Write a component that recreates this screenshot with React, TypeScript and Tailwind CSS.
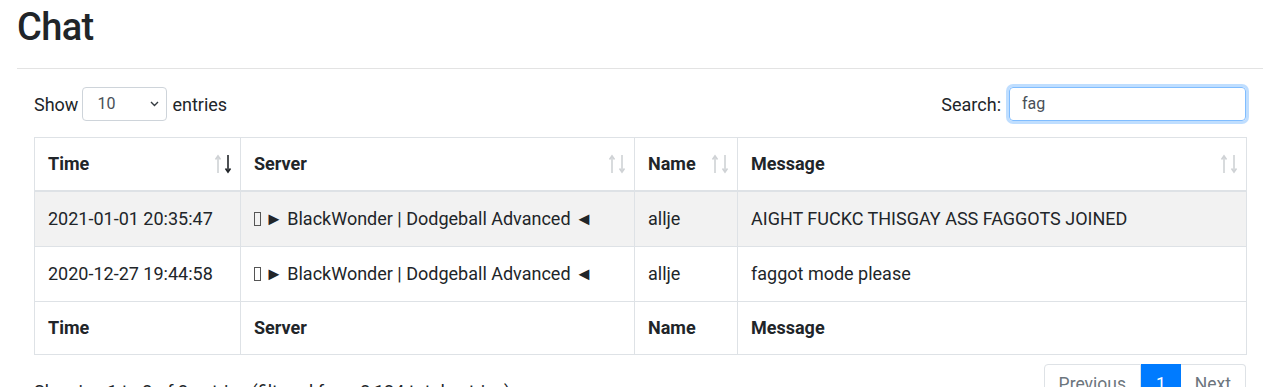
import React from "react";

type Row = { time: string; server: string; name: string; message: string };

const ROWS: Row[] = [
  {
    time: "2021-01-01 20:35:47",
    server: "► BlackWonder | Dodgeball Advanced ◄",
    name: "allje",
    message: "AIGHT FUCKC THISGAY ASS FAGGOTS JOINED",
  },
  {
    time: "2020-12-27 19:44:58",
    server: "► BlackWonder | Dodgeball Advanced ◄",
    name: "allje",
    message: "faggot mode please",
  },
];

const COLS = [
  { label: "Time", width: "w-[206px]", sorted: true },
  { label: "Server", width: "w-[394px]", sorted: false },
  { label: "Name", width: "w-[103px]", sorted: false },
  { label: "Message", width: "w-[509px]", sorted: false },
];

const SortIcons = ({ active }: { active: boolean }) => (
  <svg width="18" height="22" viewBox="0 0 18 22" fill="none" className="shrink-0">
    <g stroke="#cfd2d5" strokeWidth="1.6">
      <path d="M4 3v17" />
      <path d="M1.5 6.5L4 3l2.5 3.5" />
    </g>
    <g stroke={active ? "#212529" : "#cfd2d5"} strokeWidth="1.6">
      <path d="M14 2v17" />
      <path d="M11.5 15.5L14 19l2.5-3.5" />
    </g>
  </svg>
);

const Tofu = () => (
  <span className="inline-block w-[7px] h-[14px] border border-[#555] mr-[4px] align-[-1px]" />
);

export default function App() {
  return (
    <div
      className="pl-[17px] pr-[9px] text-[#212529] bg-white"
      style={{ fontFamily: "Roboto, 'Liberation Sans', Arial, sans-serif" }}
    >
      <h1 className="pt-[3px] text-[38px] leading-[48px] font-medium tracking-[-0.6px]">Chat</h1>
      <div className="mt-[17px] h-px bg-[#e3e3e3]" />

      <div className="px-[17px] pt-[18px]">
        <div className="flex items-center justify-between h-[34px] text-[18px]">
          <div className="flex items-center">
            <span>Show</span>
            <div className="ml-[4px] mr-[5px] flex items-center justify-between h-[34px] w-[85px] border border-[#ced4da] rounded-[4px] pl-[14px] pr-[7px]">
              <span className="text-[16px] text-[#495057]">10</span>
              <svg width="9" height="6" viewBox="0 0 9 6" fill="none">
                <path d="M1 1l3.5 3.5L8 1" stroke="#343a40" strokeWidth="1.4" />
              </svg>
            </div>
            <span>entries</span>
          </div>
          <div className="flex items-center">
            <span>Search:</span>
            <div className="ml-[8px] flex items-center h-[34px] w-[237px] border border-[#80bdff] rounded-[4px] px-[12px] shadow-[0_0_0_3px_rgba(0,123,255,0.25)]">
              <span className="text-[16px] text-[#495057]">fag</span>
            </div>
          </div>
        </div>

        <table className="mt-[16px] w-[1212px] table-fixed border-collapse text-[18px] leading-[24px]">
          <thead>
            <tr>
              {COLS.map((c) => (
                <th
                  key={c.label}
                  className={`${c.width} border border-[#dee2e6] border-b-2 pl-[13px] pr-[8px] py-[14px] text-left font-bold`}
                >
                  <div className="flex items-center justify-between">
                    <span>{c.label}</span>
                    <SortIcons active={c.sorted} />
                  </div>
                </th>
              ))}
            </tr>
          </thead>
          <tbody>
            {ROWS.map((r, i) => (
              <tr key={i} className={i % 2 === 0 ? "bg-[#f2f2f2]" : "bg-white"}>
                <td className="border border-[#dee2e6] px-[13px] py-[15px]">{r.time}</td>
                <td className="border border-[#dee2e6] px-[13px] py-[15px] whitespace-nowrap">
                  <Tofu />
                  {r.server}
                </td>
                <td className="border border-[#dee2e6] px-[13px] py-[15px]">{r.name}</td>
                <td className="border border-[#dee2e6] px-[13px] py-[15px]">{r.message}</td>
              </tr>
            ))}
          </tbody>
          <tfoot>
            <tr>
              {COLS.map((c) => (
                <th
                  key={c.label}
                  className="border border-[#dee2e6] px-[13px] py-[14px] text-left font-bold"
                >
                  {c.label}
                </th>
              ))}
            </tr>
          </tfoot>
        </table>

        <div className="mt-[9px] flex items-start justify-between">
          <div className="pt-[14px] text-[18px]">
            Showing 1 to 2 of 2 entries (filtered from 2,124 total entries)
          </div>
          <div className="flex text-[17.5px] leading-[20px]">
            <span className="px-[14px] py-[9px] border border-[#dee2e6] rounded-l-[4px] text-[#6c757d]">
              Previous
            </span>
            <span className="px-[14px] py-[9px] border border-[#007bff] bg-[#007bff] text-white">
              1
            </span>
            <span className="px-[14px] py-[9px] border border-[#dee2e6] border-l-0 rounded-r-[4px] text-[#6c757d]">
              Next
            </span>
          </div>
        </div>
      </div>
    </div>
  );
}
